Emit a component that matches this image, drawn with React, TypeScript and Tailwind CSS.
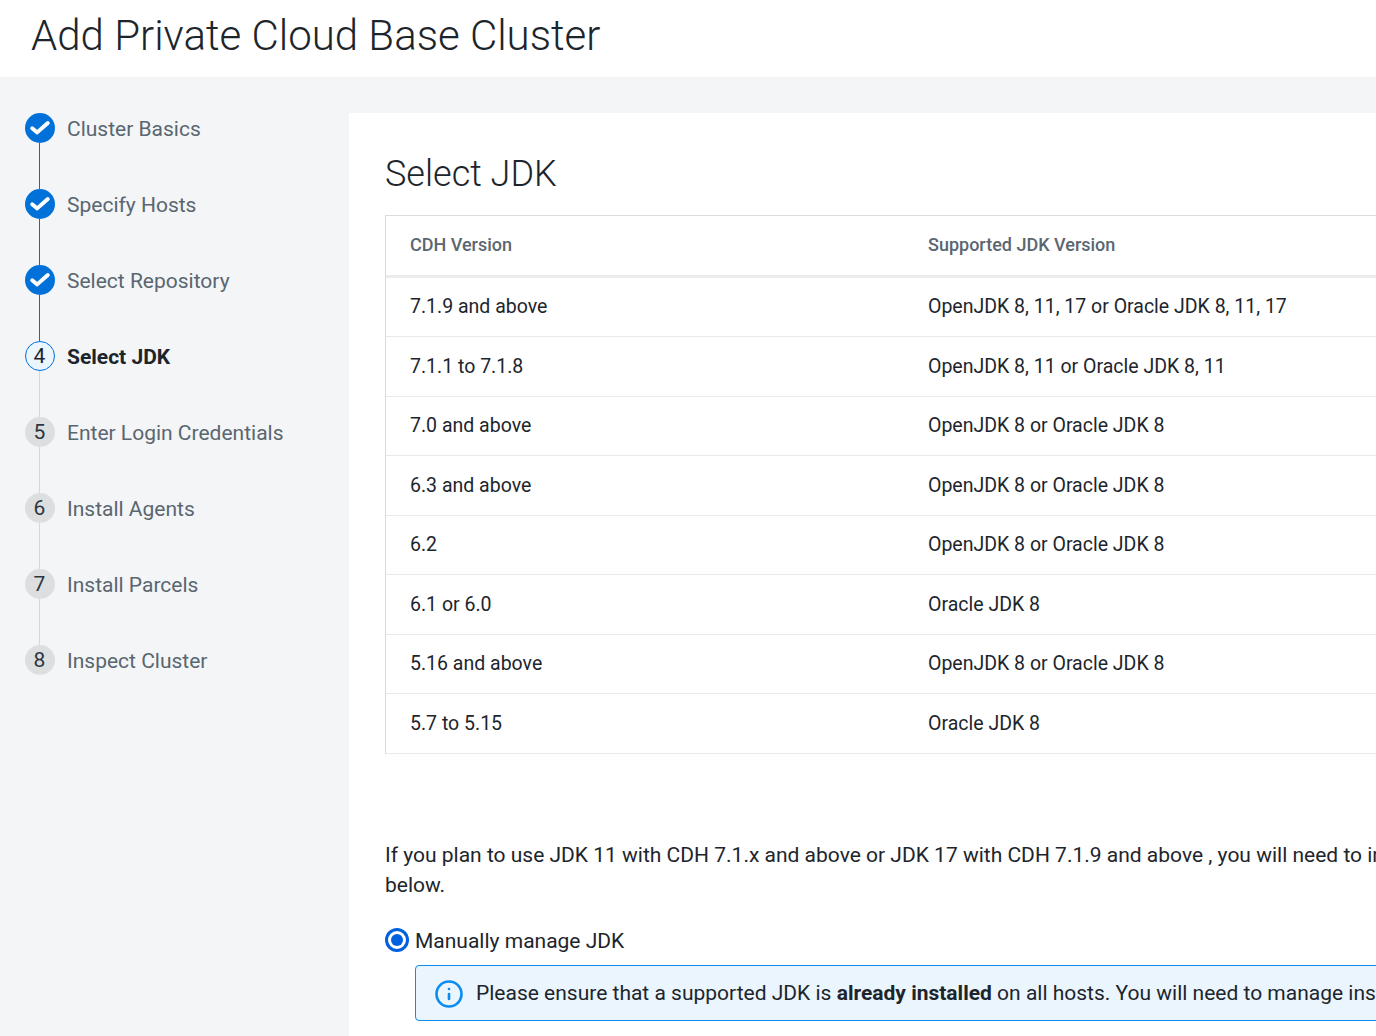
import { Info } from 'lucide-react';

const steps = [
  { n: 1, label: 'Cluster Basics', state: 'done' },
  { n: 2, label: 'Specify Hosts', state: 'done' },
  { n: 3, label: 'Select Repository', state: 'done' },
  { n: 4, label: 'Select JDK', state: 'active' },
  { n: 5, label: 'Enter Login Credentials', state: 'todo' },
  { n: 6, label: 'Install Agents', state: 'todo' },
  { n: 7, label: 'Install Parcels', state: 'todo' },
  { n: 8, label: 'Inspect Cluster', state: 'todo' },
];

const rows = [
  ['7.1.9 and above', 'OpenJDK 8, 11, 17 or Oracle JDK 8, 11, 17'],
  ['7.1.1 to 7.1.8', 'OpenJDK 8, 11 or Oracle JDK 8, 11'],
  ['7.0 and above', 'OpenJDK 8 or Oracle JDK 8'],
  ['6.3 and above', 'OpenJDK 8 or Oracle JDK 8'],
  ['6.2', 'OpenJDK 8 or Oracle JDK 8'],
  ['6.1 or 6.0', 'Oracle JDK 8'],
  ['5.16 and above', 'OpenJDK 8 or Oracle JDK 8'],
  ['5.7 to 5.15', 'Oracle JDK 8'],
];

function StepIcon({ n, state }: { n: number; state: string }) {
  if (state === 'done') {
    return (
      <div className="w-[30px] h-[30px] rounded-full bg-[#0071d8] flex items-center justify-center shrink-0">
        <svg width="22" height="16" viewBox="0 0 22 16">
          <path d="M3.2 8.2 L8.2 12.4 L18.8 3" fill="none" stroke="#fff" strokeWidth="3.9" strokeLinecap="round" strokeLinejoin="round" />
        </svg>
      </div>
    );
  }
  if (state === 'active') {
    return (
      <div className="w-[30px] h-[30px] rounded-full border border-[#0071d8] bg-[#ebf5fe] text-[#1d252c] text-[21px] pr-px pt-[2px] flex items-center justify-center shrink-0">
        {n}
      </div>
    );
  }
  return (
    <div className="w-[30px] h-[30px] rounded-full bg-[#dcdee0] text-[#2b3640] text-[21px] pr-px pt-[2px] flex items-center justify-center shrink-0">
      {n}
    </div>
  );
}

function Stepper() {
  return (
    <div className="w-[349px] shrink-0 pl-[25px] pt-[36px]">
      {steps.map((s, i) => (
        <div key={s.n} className="flex h-[76px]">
          <div className="flex flex-col items-center w-[30px] shrink-0">
            <StepIcon n={s.n} state={s.state} />
            {i < steps.length - 1 && (
              <div className={s.state === 'done' ? 'w-px flex-1 -ml-px bg-[#0f6cc4]' : 'w-px flex-1 -ml-px bg-[#d5d7d9]'} />
            )}
          </div>
          <div
            className={
              s.state === 'active'
                ? 'ml-3 h-[30px] leading-[32px] text-[21px] font-bold text-[#1d252c]'
                : 'ml-3 h-[30px] leading-[32px] text-[21px] text-[#5a6670]'
            }
          >
            {s.label}
          </div>
        </div>
      ))}
    </div>
  );
}

export default function App() {
  return (
    <div className="h-[1036px] w-[1376px] overflow-hidden bg-[#f3f5f7] font-['Roboto',sans-serif] text-[#1d252c]">
      <div className="h-[77px] bg-white pl-[31px] pb-[6px] flex items-center">
        <h1 className="text-[42px] font-light leading-[70px] whitespace-nowrap">Add Private Cloud Base Cluster</h1>
      </div>
      <div className="flex">
        <Stepper />
        <div className="flex-1 min-w-0 mt-[36px] bg-white pl-[36px] h-[923px] overflow-hidden">
          <h2 className="mt-[37px] text-[36px] font-light leading-[48px]">Select JDK</h2>
          <div className="mt-[17px] w-[1200px] border-t border-l border-[#d9dbdd]">
            <div className="flex h-[61.5px] pb-[2px] border-b-[3px] border-[#ececec] items-center text-[18px] font-medium text-[#5a6670]">
              <div className="w-[542px] pl-[24px] shrink-0">CDH Version</div>
              <div>Supported JDK Version</div>
            </div>
            {rows.map((r) => (
              <div key={r[0]} className="flex h-[59.5px] border-b border-[#e8e9ea] items-center text-[19.5px]">
                <div className="w-[542px] pl-[24px] shrink-0">{r[0]}</div>
                <div>{r[1]}</div>
              </div>
            ))}
          </div>
          <p className="mt-[86.5px] w-[1200px] text-[21px] leading-[30px]">
            <span className="whitespace-nowrap">If you plan to use JDK 11 with CDH 7.1.x and above or JDK 17 with CDH 7.1.9 and above , you will need to install it manually on all hosts using the instructions</span>
            <br />
            below.
          </p>
          <div className="mt-[26px] flex items-center h-[30px]">
            <span className="w-[24px] h-[24px] mb-[2px] rounded-full border-[3px] border-[#0061df] flex items-center justify-center shrink-0">
              <span className="w-[12px] h-[12px] rounded-full bg-[#0061df]" />
            </span>
            <span className="ml-[6px] pt-[2px] text-[21px] whitespace-nowrap">Manually manage JDK</span>
          </div>
          <div className="mt-[9px] ml-[30px] w-[1200px] h-[56px] rounded-[4px] border border-[#0a8cf0] bg-[#ebf5fe] flex items-center pl-[18px]">
            <Info size={30} strokeWidth={2.1} className="text-[#0a8cf0] shrink-0 mt-[2px]" />
            <span className="ml-[12px] pt-[2px] text-[21px] whitespace-nowrap">
              Please ensure that a supported JDK is <b>already installed</b> on all hosts. You will need to manage installing the JDK yourself.
            </span>
          </div>
        </div>
      </div>
    </div>
  );
}
